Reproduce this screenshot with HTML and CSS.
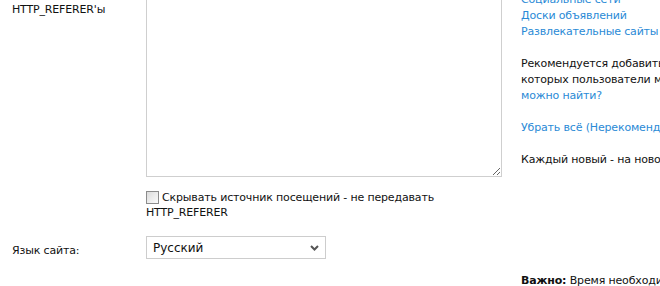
FILE: index.html
```html
<!DOCTYPE html>
<html lang="ru">
<head>
<meta charset="utf-8">
<link rel="stylesheet" href="styles.css">
</head>
<body>
<div class="page">
  <div class="form">
    <div class="row row-referer">
      <div class="label label-top">HTTP_REFERER'ы</div>
      <div class="field">
        <textarea class="area"></textarea>
        <label class="check">
          <span class="box"></span>
          <span class="check-text">Скрывать источник посещений - не передавать HTTP_REFERER</span>
        </label>
      </div>
    </div>
    <div class="row row-lang">
      <div class="label label-mid">Язык сайта:</div>
      <div class="field">
        <div class="select">
          <span>Русский</span>
          <svg class="chev" width="9" height="6" viewBox="0 0 9 6"><path d="M1 1 L4.5 4.5 L8 1" fill="none" stroke="#555" stroke-width="2"/></svg>
        </div>
      </div>
    </div>
  </div>
  <aside class="side">
    <p class="block">
      <a class="link">Социальные сети</a><br>
      <a class="link">Доски объявлений</a><br>
      <a class="link">Развлекательные сайты</a>
    </p>
    <p class="block">Рекомендуется добавить сайты, на<br>которых пользователи могут вас<br><a class="link">можно найти?</a></p>
    <p class="block"><a class="link">Убрать всё (Нерекомендуется)</a></p>
    <p class="block">Каждый новый - на новой строке</p>
    <p class="note"><b>Важно:</b> Время необходимое для обработки</p>
  </aside>
</div>
</body>
</html>
```

FILE: styles.css
```css
html, body {
  margin: 0;
  padding: 0;
  background: #fff;
}
body {
  width: 660px;
  height: 286px;
  overflow: hidden;
  font-family: "DejaVu Sans", Verdana, sans-serif;
  font-size: 11px;
  letter-spacing: -0.16px;
  line-height: 16px;
  color: #111;
}
.page {
  display: flex;
  align-items: flex-start;
  white-space: nowrap;
}
.form {
  margin-top: -10px;
  width: 502px;
  flex: none;
}
.row {
  display: flex;
  align-items: flex-start;
}
.label {
  width: 134px;
  padding-left: 12px;
  flex: none;
}
.label-top {
  padding-top: 12px;
}
.label-mid {
  padding-top: 7px;
}
.field {
  width: 356px;
  display: flex;
  flex-direction: column;
  align-items: flex-start;
}
.area {
  display: block;
  box-sizing: border-box;
  width: 356px;
  height: 187px;
  margin: 0;
  border: 1px solid #cfcfcf;
  background: #fff;
  resize: both;
  outline: none;
}
.check {
  display: flex;
  align-items: flex-start;
  margin-top: 13px;
  white-space: normal;
  width: 300px;
  line-height: 15px;
}
.box {
  flex: none;
  box-sizing: border-box;
  width: 13px;
  height: 13px;
  margin-top: 1px;
  margin-right: 3px;
  border: 1px solid #8c8c8c;
  background: linear-gradient(135deg, #dcdcdc, #fbfbfb);
}
.check-text {
  margin-left: -16px;
  text-indent: 16px;
}
.row-lang {
  margin-top: 16px;
}
.select {
  box-sizing: border-box;
  width: 180px;
  height: 23px;
  border: 1px solid #cdcdcd;
  display: flex;
  align-items: center;
  justify-content: space-between;
  padding: 0 6px 0 6px;
  font-size: 12px;
  letter-spacing: 0;
  color: #111;
}
.chev {
  display: block;
}
.side {
  margin-left: 19px;
  margin-top: -8px;
  width: 139px;
  overflow: hidden;
  flex: none;
}
.block {
  margin: 0 0 16px 0;
}
.link {
  color: #2a8ad6;
  text-decoration: none;
}
.note {
  margin: 105px 0 0 0;
}
.note b {
  font-weight: bold;
}
```
